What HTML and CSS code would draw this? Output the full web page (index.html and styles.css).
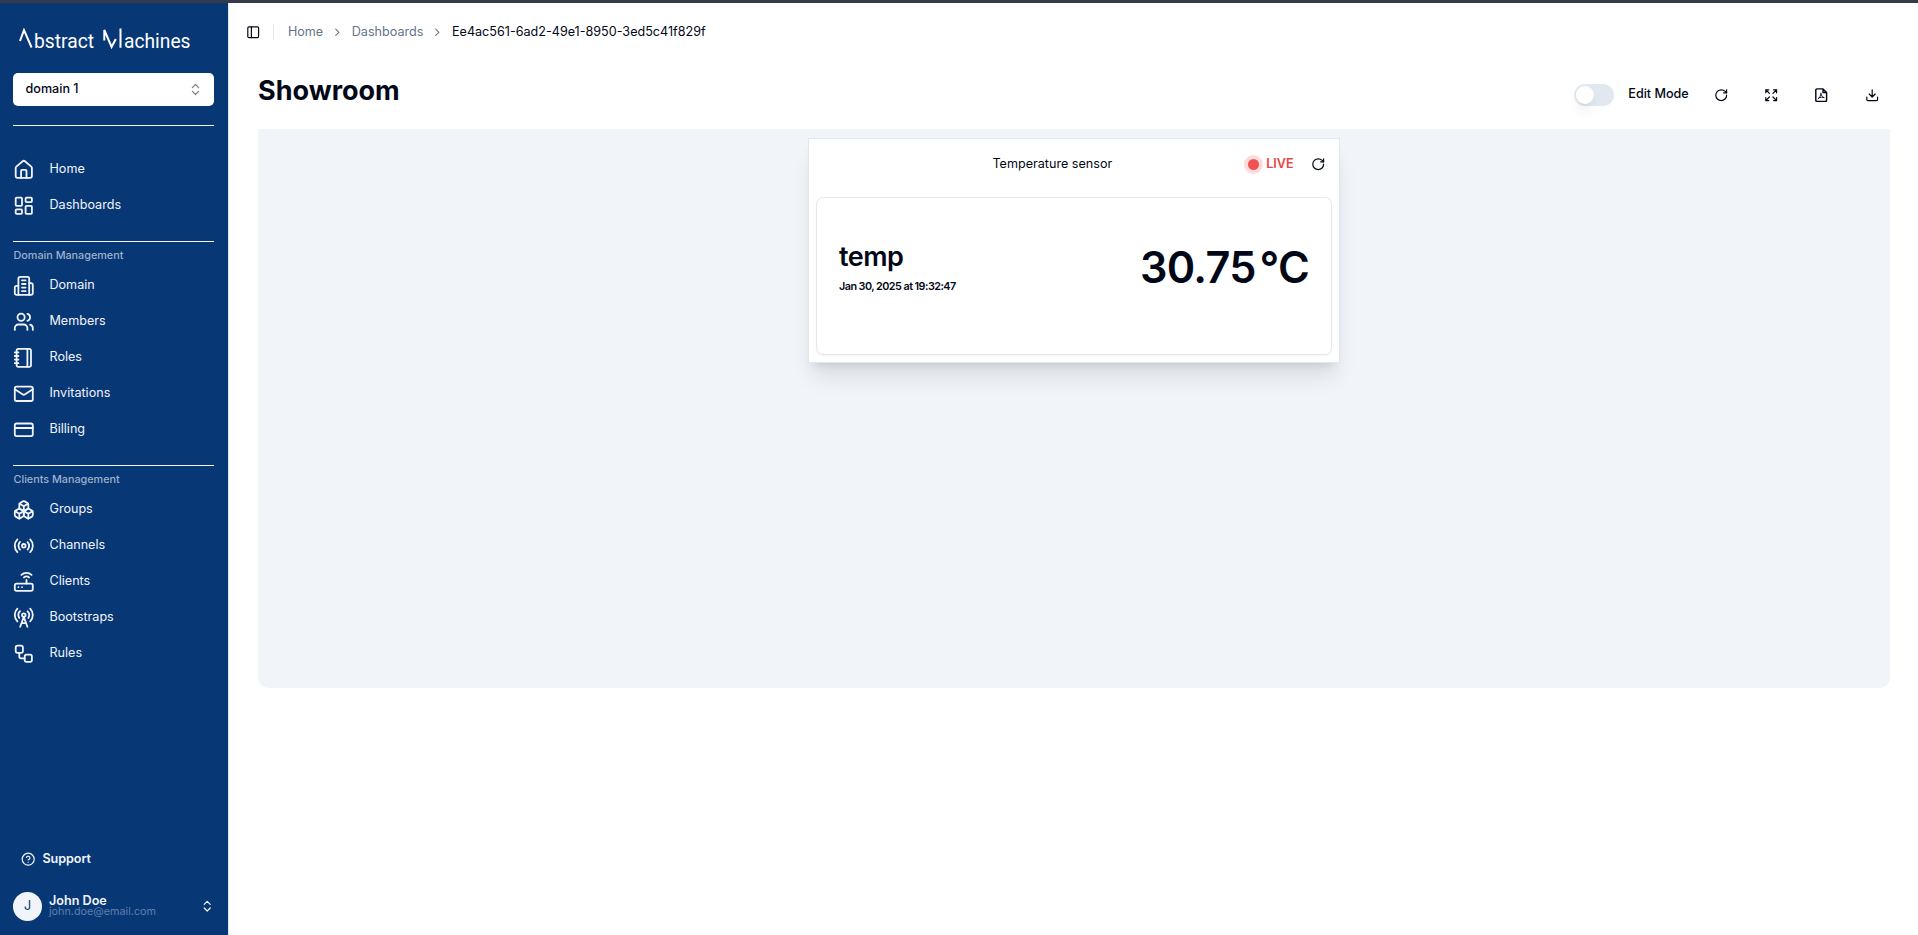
FILE: index.html
```html
<!DOCTYPE html>
<html lang="en">
<head>
<meta charset="utf-8">
<title>Showroom</title>
<link rel="stylesheet" href="styles.css">
</head>
<body>
<div class="topline"></div>
<div class="app">
  <aside class="sidebar">
    <svg class="logo" viewBox="0 0 174 26" role="img" aria-label="Abstract Machines">
      <path d="M1 14 5 3.200 12.600 20.500M85.300 13.500V3L92.600 20 96.800 12M101.500 1.500V20.700" />
      <text x="15" y="20.500" textLength="60" lengthAdjust="spacingAndGlyphs">bstract</text>
      <text x="105" y="20.500" textLength="66.500" lengthAdjust="spacingAndGlyphs">achines</text>
    </svg>
    <div class="select"><span>domain 1</span>
      <svg class="icon" viewBox="0 0 24 24"><path d="m7 15 5 5 5-5M7 9l5-5 5 5"/></svg>
    </div>
    <nav class="nav nav-main">
      <a class="item"><svg class="icon" viewBox="0 0 24 24"><path d="M15 21v-8a1 1 0 0 0-1-1h-4a1 1 0 0 0-1 1v8"/><path d="M3 10a2 2 0 0 1 .709-1.528l7-5.999a2 2 0 0 1 2.582 0l7 5.999A2 2 0 0 1 21 10v9a2 2 0 0 1-2 2H5a2 2 0 0 1-2-2z"/></svg><span>Home</span></a>
      <a class="item"><svg class="icon" viewBox="0 0 24 24"><rect width="7" height="9" x="3" y="3" rx="1"/><rect width="7" height="5" x="14" y="3" rx="1"/><rect width="7" height="9" x="14" y="12" rx="1"/><rect width="7" height="5" x="3" y="16" rx="1"/></svg><span>Dashboards</span></a>
    </nav>
    <nav class="nav">
      <h2 class="label">Domain Management</h2>
      <a class="item"><svg class="icon" viewBox="0 0 24 24"><path d="M6 22V4a2 2 0 0 1 2-2h8a2 2 0 0 1 2 2v18Z"/><path d="M6 12H4a2 2 0 0 0-2 2v6a2 2 0 0 0 2 2h2M18 9h2a2 2 0 0 1 2 2v9a2 2 0 0 1-2 2h-2M10 6h4M10 10h4M10 14h4M10 18h4"/></svg><span>Domain</span></a>
      <a class="item"><svg class="icon" viewBox="0 0 24 24"><path d="M16 21v-2a4 4 0 0 0-4-4H6a4 4 0 0 0-4 4v2"/><circle cx="9" cy="7" r="4"/><path d="M22 21v-2a4 4 0 0 0-3-3.87M16 3.13a4 4 0 0 1 0 7.75"/></svg><span>Members</span></a>
      <a class="item"><svg class="icon" viewBox="0 0 24 24"><path d="M2 6h4M2 10h4M2 14h4M2 18h4"/><rect width="16" height="20" x="4" y="2" rx="2"/><path d="M16 2v20"/></svg><span>Roles</span></a>
      <a class="item"><svg class="icon" viewBox="0 0 24 24"><rect width="20" height="16" x="2" y="4" rx="2"/><path d="m22 7-8.97 5.7a1.94 1.94 0 0 1-2.06 0L2 7"/></svg><span>Invitations</span></a>
      <a class="item"><svg class="icon" viewBox="0 0 24 24"><rect width="20" height="14" x="2" y="5" rx="2"/><path d="M2 10h20"/></svg><span>Billing</span></a>
    </nav>
    <nav class="nav">
      <h2 class="label">Clients Management</h2>
      <a class="item"><svg class="icon" viewBox="0 0 24 24"><path d="M2.97 12.92A2 2 0 0 0 2 14.63v3.24a2 2 0 0 0 .97 1.71l3 1.8a2 2 0 0 0 2.06 0L12 19v-5.5l-5-3-4.03 2.42Z"/><path d="m7 16.5-4.74-2.85M7 16.500l5-3M7 16.500v5.170"/><path d="M12 13.500V19l3.970 2.380a2 2 0 0 0 2.060 0l3-1.800a2 2 0 0 0 .970-1.710v-3.240a2 2 0 0 0-.970-1.710L17 10.500l-5 3Z"/><path d="m17 16.500-5-3M17 16.500l4.740-2.850M17 16.500v5.170"/><path d="M7.970 4.420A2 2 0 0 0 7 6.130v4.370l5 3 5-3V6.130a2 2 0 0 0-.970-1.710l-3-1.800a2 2 0 0 0-2.060 0l-3 1.800Z"/><path d="M12 8 7.260 5.150M12 8l4.740-2.850M12 13.500V8"/></svg><span>Groups</span></a>
      <a class="item"><svg class="icon" viewBox="0 0 24 24"><path d="M4.900 19.100C1 15.200 1 8.800 4.900 4.900M7.800 16.200c-2.300-2.300-2.300-6.100 0-8.500M16.200 7.800c2.300 2.300 2.300 6.100 0 8.500M19.100 4.900C23 8.800 23 15.100 19.100 19"/><circle cx="12" cy="12" r="2"/></svg><span>Channels</span></a>
      <a class="item"><svg class="icon" viewBox="0 0 24 24"><rect width="20" height="8" x="2" y="14" rx="2"/><path d="M6.010 18H6M10.010 18H10M15 10v4M17.840 7.170a4 4 0 0 0-5.660 0M20.660 4.340a8 8 0 0 0-11.310 0"/></svg><span>Clients</span></a>
      <a class="item"><svg class="icon" viewBox="0 0 24 24"><path d="M4.900 16.100C1 12.200 1 5.800 4.900 1.900M7.800 4.700a6.140 6.140 0 0 0-.800 7.500"/><circle cx="12" cy="9" r="2"/><path d="M16.200 4.800c2 2 2.260 5.110.800 7.470M19.100 1.900a9.960 9.960 0 0 1 0 14.100M9.500 18h5M8 22l4-11 4 11"/></svg><span>Bootstraps</span></a>
      <a class="item"><svg class="icon" viewBox="0 0 24 24"><rect width="8" height="8" x="3" y="3" rx="2"/><path d="M7 11v4a2 2 0 0 0 2 2h4"/><rect width="8" height="8" x="13" y="13" rx="2"/></svg><span>Rules</span></a>
    </nav>
    <footer class="side-foot">
      <div class="support"><svg class="icon" viewBox="0 0 24 24"><circle cx="12" cy="12" r="10"/><path d="M9.090 9a3 3 0 0 1 5.830 1c0 2-3 3-3 3M12 17h.01"/></svg><span>Support</span></div>
      <div class="user">
        <span class="avatar">J</span>
        <div class="who"><strong>John Doe</strong><small>john.doe@email.com</small></div>
        <svg class="icon" viewBox="0 0 24 24"><path d="m7 15 5 5 5-5M7 9l5-5 5 5"/></svg>
      </div>
    </footer>
  </aside>
  <main class="main">
    <header class="crumbs">
      <svg class="icon panel" viewBox="0 0 24 24"><rect width="18" height="18" x="3" y="3" rx="2"/><path d="M9 3v18"/></svg>
      <i class="divider"></i>
      <span>Home</span>
      <svg class="icon chev" viewBox="0 0 24 24"><path d="m9 18 6-6-6-6"/></svg>
      <span>Dashboards</span>
      <svg class="icon chev" viewBox="0 0 24 24"><path d="m9 18 6-6-6-6"/></svg>
      <span class="current">Ee4ac561-6ad2-49e1-8950-3ed5c41f829f</span>
    </header>
    <div class="heading">
      <h1>Showroom</h1>
      <div class="tools">
        <span class="switch"><i></i></span>
        <span class="mode">Edit Mode</span>
        <svg class="icon" viewBox="0 0 24 24"><path d="M21 12a9 9 0 1 1-9-9c2.520 0 4.930 1 6.740 2.740L21 8"/><path d="M21 3v5h-5"/></svg>
        <svg class="icon" viewBox="0 0 24 24"><path d="m15 9 6-6M21 8V3h-5M9 9 3 3M3 8V3h5M15 15l6 6M21 16v5h-5M9 15l-6 6M3 16v5h5"/></svg>
        <svg class="icon pdf" viewBox="0 0 24 24"><path d="M15 1.500H5a2 2 0 0 0-2 2v17a2 2 0 0 0 2 2h14a2 2 0 0 0 2-2V7.500zM15 1.500v6h6"/><path class="thin" d="M11.500 8.500c0 4-1.500 7-4.500 9.500M12 10c.3 3 1.500 5 4.500 6M8 16.500c2.500-1.200 5.500-1.400 8.500-.5"/></svg>
        <svg class="icon" viewBox="0 0 24 24"><path d="M21 15v4a2 2 0 0 1-2 2H5a2 2 0 0 1-2-2v-4M7 10l5 5 5-5M12 15V3"/></svg>
      </div>
    </div>
    <section class="canvas">
      <article class="widget">
        <header class="widget-head">
          <span class="title">Temperature sensor</span>
          <span class="live"><i></i>LIVE</span>
          <svg class="icon" viewBox="0 0 24 24"><path d="M21 12a9 9 0 1 1-9-9c2.520 0 4.930 1 6.740 2.740L21 8"/><path d="M21 3v5h-5"/></svg>
        </header>
        <div class="reading">
          <div><div class="name">temp</div><div class="date">Jan 30, 2025 at 19:32:47</div></div>
          <div class="value"><span>30.75</span><span>°C</span></div>
        </div>
      </article>
    </section>
  </main>
</div>
</body>
</html>
```
FILE: styles.css
```css
* { box-sizing: border-box; }
body {
  margin: 0;
  height: 935px;
  display: flex;
  flex-direction: column;
  overflow: hidden;
  background: #fff;
  color: #020817;
  font: 12.6px/18px Inter, sans-serif;
}
.topline { height: 3px; flex: none; background: #353b4b; }
.app { flex: 1; display: flex; min-height: 0; }
.icon {
  flex: none;
  display: block;
  fill: none;
  stroke: currentColor;
  stroke-width: 2;
  stroke-linecap: round;
  stroke-linejoin: round;
}

/* sidebar */
.sidebar {
  width: 229px;
  flex: none;
  display: flex;
  flex-direction: column;
  padding: 24px 14px 0 13px;
  background: #083776;
  border-right: 1px solid #e2e8f0;
  color: #f1f5f9;
}
.logo { display: block; width: 174px; height: 26px; margin-left: 6px; flex: none; overflow: visible; }
.logo path { fill: none; stroke: #fff; stroke-width: 2; }
.logo text { fill: #fff; font: 20px Roboto, sans-serif; }
.select {
  height: 33px;
  flex: none;
  margin-top: 20px;
  padding: 0 11px 0 12.500px;
  display: flex;
  align-items: center;
  justify-content: space-between;
  background: #fff;
  border-radius: 5px;
  color: #020817;
  font-weight: 500;
}
.select span { margin-top: -2px; }
.select .icon { width: 15px; height: 15px; opacity: .5; }
.nav { margin-top: 17px; border-top: 1px solid #f1f5f9; }
.nav-main { margin-top: 19px; padding-top: 26px; }
.label {
  margin: 0;
  height: 26px;
  padding: 5px 0 0 .5px;
  font-size: 10.8px;
  line-height: 18px;
  font-weight: 500;
  color: #9db0ca;
}
.item { height: 36px; display: flex; align-items: center; gap: 14.900px; }
.item .icon { width: 21.6px; height: 21.6px; }
.item span { margin-top: -3px; font-weight: 400; }
.side-foot { margin-top: auto; }
.support { display: flex; align-items: center; gap: 7px; height: 20px; margin-left: 8px; font-weight: 600; letter-spacing: -.05px; }
.support .icon { width: 14.4px; height: 14.4px; }
.support span { margin-top: -1px; }
.user { display: flex; align-items: center; height: 29px; margin: 23px 0 14px; }
.avatar {
  width: 29px;
  height: 29px;
  border-radius: 50%;
  background: #f1f5f9;
  color: #083776;
  text-align: center;
  line-height: 28px;
}
.who { display: flex; flex-direction: column; margin: -1px 0 0 7px; flex: 1; }
.who strong { font-weight: 600; line-height: 11px; }
.who small { font-size: 10.8px; line-height: 11px; color: #5f7faa; }
.user .icon { width: 14.4px; height: 14.4px; }

/* page */
.main { flex: 1; padding-right: 28px; }
.crumbs { height: 58px; padding-left: 17px; display: flex; align-items: center; color: #64748b; }
.panel { width: 14.4px; height: 14.4px; color: #020817; }
.divider { width: 1px; height: 14px; margin: 0 14px 0 12.500px; background: #e2e8f0; }
.chev { width: 12.6px; height: 12.6px; margin: 0 8px; }
.crumbs .current { color: #020817; }
.heading { height: 68px; padding-left: 29px; display: flex; justify-content: space-between; }
h1 { margin: 11px 0 0; font-size: 27px; line-height: 38px; font-weight: 700; }
.tools { display: flex; align-items: center; height: 68px; padding: 0 11px 0 0; }
.tools .icon { width: 14.4px; height: 14.4px; margin-left: 35.900px; }
.tools .mode + .icon { margin-left: 25px; }
.tools .icon.pdf { stroke-width: 2.4; }
.tools .pdf .thin { stroke-width: 1.5; }
.switch { width: 40px; height: 22px; padding: 2px; border-radius: 11px; background: #e2e8f0; }
.switch i { display: block; width: 18px; height: 18px; border-radius: 50%; background: #fff; box-shadow: 0 9px 13px -3px rgba(0,0,0,.1), 0 4px 5px -4px rgba(0,0,0,.1); }
.mode { margin: -3px 0 0 14px; font-weight: 500; }
.canvas { height: 559px; margin-left: 29px; padding: 9px 0 0 550px; background: #f1f5f9; border-radius: 0 0 10px 10px; }
.widget {
  width: 532px;
  height: 225px;
  padding: 0 7px;
  background: #fff;
  border: 1px solid #e2e8f0;
  box-shadow: 0 18px 22px -5px rgba(0,0,0,.1), 0 7px 9px -5px rgba(0,0,0,.1);
}
.widget-head { height: 58px; padding: 0 6.500px 8px 0; display: flex; align-items: center; }
.title { flex: 1; text-align: right; }
.live { display: flex; align-items: center; margin-left: 132px; color: #ef4444; font-weight: 600; }
.live i { width: 19px; height: 19px; margin-right: 3px; border: 4px solid #fddcdc; border-radius: 50%; background: #f05252; }
.widget-head .icon { width: 14.4px; height: 14.4px; margin-left: 17.500px; }
.reading {
  height: 158px;
  padding: 44px 22px 0;
  display: flex;
  justify-content: space-between;
  border: 1px solid #e2e8f0;
  border-radius: 7px;
  box-shadow: 0 1px 2px rgba(0,0,0,.05);
  font-weight: 600;
}
.name { font-size: 27px; line-height: 29px; letter-spacing: -.5px; }
.date { margin-top: 7px; font-size: 10.8px; line-height: 17px; letter-spacing: -.54px; }
.value { display: flex; gap: 4px; font-size: 43.2px; line-height: 51px; letter-spacing: -.75px; }
```
